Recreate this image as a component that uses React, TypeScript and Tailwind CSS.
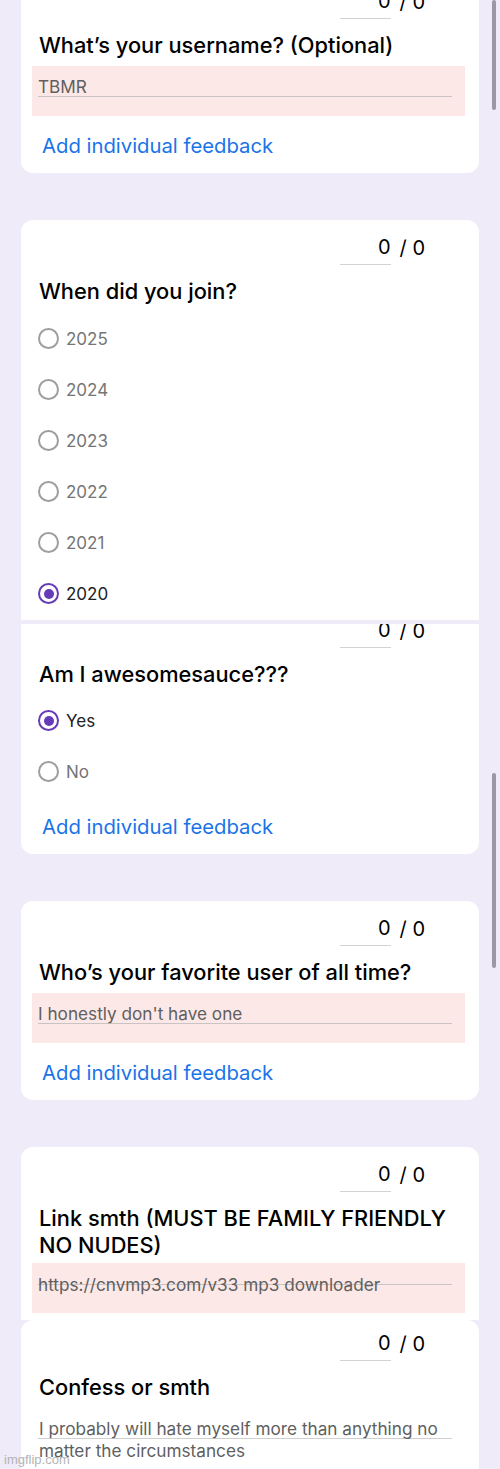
import React from "react";

const font = "font-['Inter','Noto_Sans',sans-serif]";

function Score({ shift = 0 }: { shift?: number }) {
  return (
    <div className={`flex justify-end pr-[54px] h-[45px] text-[20px] leading-[20px] text-black ${shift ? "-mt-[4px]" : ""}`}>
      <div className="w-[51px] h-[45px] border-b border-[#d3d3d3] flex items-end justify-end pb-[7px]">0</div>
      <div className="h-[45px] flex items-end pb-[7px] ml-[9px] whitespace-pre">/ 0</div>
    </div>
  );
}

function Title({ children }: { children: React.ReactNode }) {
  return (
    <div className="pl-[18px] pr-[20px] mt-[13px] text-[21.8px] leading-[27px] font-medium text-black">
      {children}
    </div>
  );
}

function Pink({ text }: { text: string }) {
  return (
    <div className="ml-[11px] mr-[14px] h-[50px] bg-[#fce8e6] pt-[11px]">
      <div className="ml-[6px] mr-[13px] border-b border-[#c9c3c3] text-[17.2px] leading-[19px] text-[#5f5f5f]">
        {text}
      </div>
    </div>
  );
}

function Feedback() {
  return (
    <div className="pl-[21px] mt-[17px] pb-[14px] text-[20.3px] leading-[26px] text-[#1a73e8]">
      Add individual feedback
    </div>
  );
}

function Radio({ label, checked = false }: { label: string; checked?: boolean }) {
  return (
    <div className="h-[51px] flex items-center pl-[17px]">
      {checked ? (
        <div className="w-[21px] h-[21px] rounded-full border-[2.5px] border-[#673ab7] flex items-center justify-center">
          <div className="w-[10px] h-[10px] rounded-full bg-[#673ab7]" />
        </div>
      ) : (
        <div className="w-[21px] h-[21px] rounded-full border-2 border-[#9e9e9e]" />
      )}
      <span className={`ml-[7px] text-[17px] leading-[20px] ${checked ? "text-[#202124]" : "text-[#757575]"}`}>
        {label}
      </span>
    </div>
  );
}

export default function App() {
  return (
    <div className={`relative w-[500px] h-[1469px] overflow-hidden bg-[#f0ebf8] ${font}`}>
      <div className="flex flex-col">
        {/* Card 1 */}
        <div className="mx-[21px] -mt-[26px] bg-white rounded-[12px]">
          <Score />
          <Title>What’s your username? (Optional)</Title>
          <div className="mt-[7px]">
            <Pink text="TBMR" />
          </div>
          <Feedback />
        </div>

        {/* Card 2 */}
        <div className="mx-[21px] mt-[47px] h-[400px] overflow-hidden bg-white rounded-t-[12px]">
          <Score />
          <Title>When did you join?</Title>
          <div className="mt-[8px]">
            <Radio label="2025" />
            <Radio label="2024" />
            <Radio label="2023" />
            <Radio label="2022" />
            <Radio label="2021" />
            <Radio label="2020" checked />
          </div>
        </div>

        {/* Card 3 */}
        <div className="mx-[21px] mt-[4px] overflow-hidden bg-white rounded-b-[12px]">
          <div className="-mt-[21px]">
            <Score />
            <Title>Am I awesomesauce???</Title>
            <div className="mt-[7px]">
              <Radio label="Yes" checked />
              <Radio label="No" />
            </div>
            <Feedback />
          </div>
        </div>

        {/* Card 4 */}
        <div className="mx-[21px] mt-[47px] bg-white rounded-[12px]">
          <Score />
          <Title>Who’s your favorite user of all time?</Title>
          <div className="mt-[7px]">
            <Pink text="I honestly don't have one" />
          </div>
          <Feedback />
        </div>

        {/* Card 5 */}
        <div className="mx-[21px] mt-[47px] h-[173px] overflow-hidden bg-white rounded-t-[12px]">
          <Score />
          <Title>Link smth (MUST BE FAMILY FRIENDLY NO NUDES)</Title>
          <div className="mt-[4px] ml-[11px] mr-[14px] h-[50px] bg-[#fce8e6] pt-[12px]">
            <div className="ml-[6px] mr-[13px] text-[17.2px] leading-[20px] text-[#5f5f5f] whitespace-nowrap">
              https://cnvmp3.com/v33 mp3 downloader
            </div>
            <div className="ml-[6px] mr-[13px] -mt-[11px] h-px bg-[#c9c3c3]" />
          </div>
        </div>

        {/* Card 6 */}
        <div className="mx-[21px] h-[200px] bg-white rounded-t-[12px]">
          <Score shift={4} />
          <Title>Confess or smth</Title>
          <div className="ml-[17px] mr-[27px] mt-[37px] h-px bg-[#cfcfcf]" />
          <div className="pl-[18px] pr-[20px] -mt-[21px] text-[17.2px] leading-[22px] text-[#5f5f5f]">
            I probably will hate myself more than anything no matter the circumstances
          </div>
        </div>
      </div>

      {/* scrollbar indicators */}
      <div className="absolute right-[4px] top-0 w-[4px] h-[110px] rounded-full bg-[#9b98a3]" />
      <div className="absolute right-[4px] top-[773px] w-[4px] h-[195px] rounded-full bg-[#9b98a3]" />

      {/* watermark */}
      <div className="absolute left-[4px] bottom-[2px] text-[13px] leading-[14px] text-[#b4b4b4] font-['Liberation_Sans',Arial,sans-serif]">
        imgflip.com
      </div>
    </div>
  );
}
